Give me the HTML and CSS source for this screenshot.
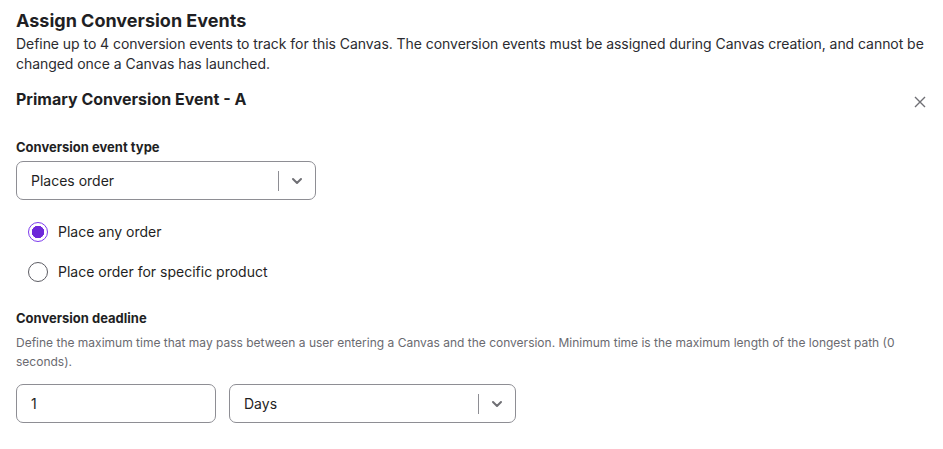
FILE: index.html
```html
<!DOCTYPE html>
<html>
<head>
<meta charset="utf-8">
<link rel="stylesheet" href="styles.css">
</head>
<body>
<div class="page">
  <h1 class="title">Assign Conversion Events</h1>
  <p class="intro">Define up to 4 conversion events to track for this Canvas. The conversion events must be assigned during Canvas creation, and cannot be changed once a Canvas has launched.</p>

  <div class="event-head">
    <h2 class="event-title">Primary Conversion Event - A</h2>
    <button class="close" aria-label="Close">
      <svg width="12" height="12" viewBox="0 0 12 12"><path d="M1 1L11 11M11 1L1 11" stroke="#6f6f74" stroke-width="1.4" fill="none"/></svg>
    </button>
  </div>

  <div class="field">
    <label class="label">Conversion event type</label>
    <div class="select select-type">
      <span class="value">Places order</span>
      <span class="sep"></span>
      <span class="chev"><svg width="12" height="8" viewBox="0 0 12 8"><path d="M2 2L6 6L10 2" stroke="#6f6f74" stroke-width="2" fill="none" stroke-linecap="round" stroke-linejoin="round"/></svg></span>
    </div>
  </div>

  <div class="radios">
    <label class="radio"><span class="dot checked"></span><span>Place any order</span></label>
    <label class="radio"><span class="dot"></span><span>Place order for specific product</span></label>
  </div>

  <div class="field deadline">
    <label class="label">Conversion deadline</label>
    <p class="help">Define the maximum time that may pass between a user entering a Canvas and the conversion. Minimum time is the maximum length of the longest path (0 seconds).</p>
    <div class="row">
      <div class="input">1</div>
      <div class="select select-unit">
        <span class="value">Days</span>
        <span class="sep"></span>
        <span class="chev"><svg width="12" height="8" viewBox="0 0 12 8"><path d="M2 2L6 6L10 2" stroke="#6f6f74" stroke-width="2" fill="none" stroke-linecap="round" stroke-linejoin="round"/></svg></span>
      </div>
    </div>
  </div>
</div>
</body>
</html>
```

FILE: styles.css
```css
* { box-sizing: border-box; }
body {
  margin: 0;
  background: #fff;
  font-family: "Inter", "Noto Sans", sans-serif;
  color: #1f1f24;
}
.page {
  padding: 8px 4px 0 16px;
}
.title {
  margin: 0;
  font-size: 18px;
  font-weight: 700;
  line-height: 26px;
}
.intro {
  margin: 0;
  font-size: 14px;
  line-height: 20px;
  color: #2b2b30;
  letter-spacing: -0.05px;
}
.event-head {
  display: flex;
  justify-content: space-between;
  align-items: center;
  margin-top: 14px;
}
.event-title {
  margin: 0;
  font-size: 16px;
  font-weight: 700;
  line-height: 22px;
}
.close {
  border: 0;
  background: none;
  padding: 0;
  margin: 6px 13px 0 0;
  display: flex;
}
.field { margin-top: 28px; }
.label {
  display: block;
  font-size: 13px;
  font-weight: 700;
  line-height: 18px;
}
.select, .input {
  display: flex;
  align-items: center;
  height: 39px;
  border: 1px solid #8e8e94;
  border-radius: 7px;
  font-size: 14px;
  background: #fff;
  flex-shrink: 0;
}
.select-type { width: 300px; margin-top: 5px; }
.value { flex: 1; padding-left: 14px; }
.sep {
  width: 1px;
  height: 20px;
  background: #8e8e94;
}
.chev {
  width: 36px;
  display: flex;
  justify-content: center;
  align-items: center;
}
.radios {
  margin-top: 22px;
  padding-left: 12px;
  display: flex;
  flex-direction: column;
  gap: 20px;
}
.radio {
  display: flex;
  align-items: center;
  gap: 10px;
  font-size: 14px;
  line-height: 20px;
}
.dot {
  width: 20px;
  height: 20px;
  border-radius: 50%;
  border: 1.5px solid #5c5c63;
  background: #fff;
  flex-shrink: 0;
}
.dot.checked {
  border: 1.5px solid #7c3aed;
  background: radial-gradient(circle, #6d28d9 0 6px, #fff 6.5px);
}
.deadline { margin-top: 27px; }
.help {
  margin: 6px 0 0;
  font-size: 12px;
  line-height: 19px;
  color: #6a6a70;
  padding-right: 12px;
}
.row {
  display: flex;
  gap: 13px;
  margin-top: 13px;
}
.input { width: 200px; padding-left: 14px; }
.select-unit { width: 287px; }
```
